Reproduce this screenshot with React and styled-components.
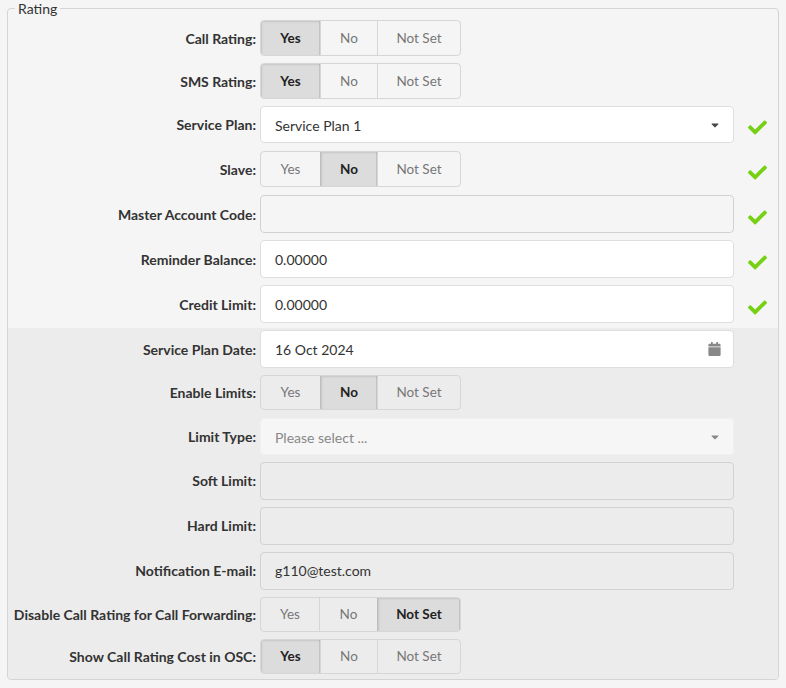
import React from 'react';
import styled, { createGlobalStyle } from 'styled-components';
import { FaCheck, FaCalendar, FaCaretDown } from 'react-icons/fa';

const GlobalStyle = createGlobalStyle`
    html, body {
        margin: 0;
        padding: 0;
        background: #f5f5f5;
        font-family: "Lato", "Liberation Sans", sans-serif;
        font-size: 14px;
        color: #333;
    }
`;

const Page = styled.div`
    width: 786px;
    height: 688px;
    padding: 0 7px;
    box-sizing: border-box;
    overflow: hidden;
`;

const Fieldset = styled.fieldset`
    margin: 0;
    padding: 0;
    border: 1px solid #d4d4d4;
    border-radius: 4px;
    min-width: 0;
    overflow: hidden;
`;

const Legend = styled.legend`
    margin-left: 7px;
    padding: 0 3px;
    font-size: 14px;
    line-height: 17px;
    color: #333;
`;

const Section = styled.div`
    display: flex;
    flex-direction: column;
    gap: 7px;
    padding: ${(p) => p.$padding};
    background: ${(p) => (p.$grey ? '#ececec' : 'transparent')};
`;

const Row = styled.div`
    display: grid;
    grid-template-columns: 248px 474px 1fr;
    column-gap: 4px;
    align-items: center;
    margin-bottom: ${(p) => p.$after || 0}px;
`;

const Label = styled.label`
    text-align: right;
    font-weight: 700;
    font-size: 14px;
    color: #333;
    white-space: nowrap;
`;

const Toggle = styled.div`
    display: inline-flex;
    height: 35.5px;
    box-sizing: border-box;
    border: 1px solid #d6d6d6;
    border-radius: 4px;
    overflow: hidden;
`;

const ToggleButton = styled.div`
    display: flex;
    align-items: center;
    justify-content: center;
    width: ${(p) => p.$width}px;
    padding-bottom: 1px;
    font-size: 13.5px;
    box-sizing: border-box;
    border-left: ${(p) => (p.$first ? 'none' : `1px solid ${p.$active ? '#bdbdbd' : '#d6d6d6'}`)};
    font-weight: ${(p) => (p.$active ? 700 : 400)};
    color: ${(p) => (p.$active ? '#222' : '#777')};
    background: ${(p) => (p.$active ? '#dcdcdc' : 'transparent')};
    box-shadow: ${(p) => (p.$active ? 'inset 1px 1px 2px rgba(0,0,0,0.1), inset -1px 0 0 #c4c4c4' : 'none')};
`;

const Field = styled.div`
    display: flex;
    align-items: center;
    justify-content: space-between;
    height: ${(p) => p.$height || 38}px;
    box-sizing: border-box;
    padding: ${(p) => (p.$select ? '1px' : '0')} 12px 0 14px;
    border-radius: 4px;
    border: 1px solid ${(p) => (p.$plain ? '#d2d2d2' : '#dedede')};
    background: ${(p) => (p.$plain ? 'transparent' : '#fff')};
    font-size: 14px;
    color: #333;
`;

const FadedField = styled(Field)`
    padding-top: 2px;
    border-color: #f0f0f0;
    background: #f6f6f6;
    color: #888;
`;

const Caret = styled(FaCaretDown)`
    width: 8px;
    height: 12px;
    margin-right: 2px;
    color: ${(p) => (p.$faded ? '#888' : '#444')};
`;

const Calendar = styled(FaCalendar)`
    width: 13px;
    height: 14px;
    color: #888;
`;

const Tick = styled(FaCheck)`
    width: 19px;
    height: 19px;
    margin: 6px 0 0 9.5px;
    color: #76d114;
`;

const options = ['Yes', 'No', 'Not Set'];

const buttonWidth = (option, value) => {
    if (option === 'Not Set') return 83;
    // Yes gives a pixel to No when Not Set is bold
    if (option === 'Yes') return value === 'Not Set' ? 58 : 59;
    return value === 'Not Set' ? 58 : 57;
};

const ToggleGroup = ({ value }) => (
    <div>
        <Toggle>
            {options.map((o, i) => (
                <ToggleButton key={o} $first={i === 0} $active={o === value} $width={buttonWidth(o, value)}>
                    {o}
                </ToggleButton>
            ))}
        </Toggle>
    </div>
);

const FormRow = ({ label, tick, after, children }) => (
    <Row $after={after}>
        <Label>{label}:</Label>
        {children}
        {tick ? <Tick /> : <span />}
    </Row>
);

const App = () => (
    <Page>
        <GlobalStyle />
        <Fieldset>
            <Legend>Rating</Legend>
            <Section $padding="3.3px 0 4.7px">
                <FormRow label="Call Rating" after={0.5}><ToggleGroup value="Yes" /></FormRow>
                <FormRow label="SMS Rating" after={0.5}><ToggleGroup value="Yes" /></FormRow>
                <FormRow label="Service Plan" tick after={1}>
                    <Field $height={37} $select>Service Plan 1<Caret /></Field>
                </FormRow>
                <FormRow label="Slave" tick after={1.5}><ToggleGroup value="No" /></FormRow>
                <FormRow label="Master Account Code" tick><Field $plain /></FormRow>
                <FormRow label="Reminder Balance" tick><Field>0.00000</Field></FormRow>
                <FormRow label="Credit Limit" tick><Field>0.00000</Field></FormRow>
            </Section>
            <Section $grey $padding="2.4px 0 4.8px">
                <FormRow label="Service Plan Date" after={-0.7}>
                    <Field>16 Oct 2024<Calendar /></Field>
                </FormRow>
                <FormRow label="Enable Limits" after={0.5}><ToggleGroup value="No" /></FormRow>
                <FormRow label="Limit Type">
                    <FadedField $height={37} $select>Please select ...<Caret $faded /></FadedField>
                </FormRow>
                <FormRow label="Soft Limit"><Field $plain /></FormRow>
                <FormRow label="Hard Limit"><Field $plain /></FormRow>
                <FormRow label="Notification E-mail"><Field $plain>g110@test.com</Field></FormRow>
                <FormRow label="Disable Call Rating for Call Forwarding" after={-0.5}><ToggleGroup value="Not Set" /></FormRow>
                <FormRow label="Show Call Rating Cost in OSC"><ToggleGroup value="Yes" /></FormRow>
            </Section>
        </Fieldset>
    </Page>
);

export default App;
